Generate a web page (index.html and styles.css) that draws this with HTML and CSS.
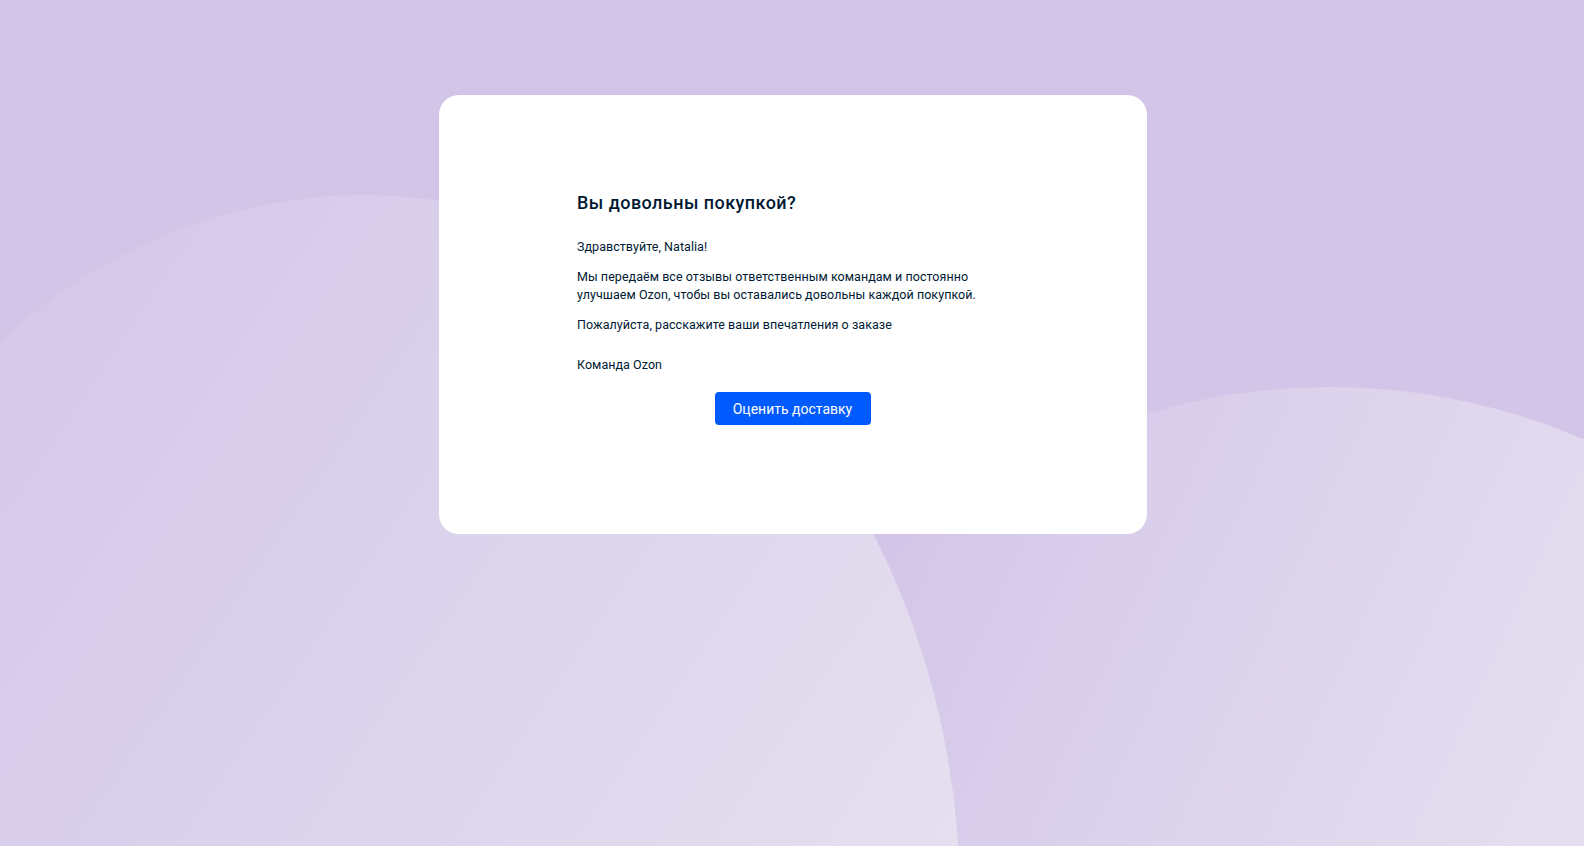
FILE: index.html
```html
<!DOCTYPE html>
<html lang="ru">
<head>
<meta charset="utf-8">
<title>Вы довольны покупкой?</title>
<link rel="stylesheet" href="styles.css">
</head>
<body>
<svg class="backdrop" width="1584" height="846" viewBox="0 0 1584 846" aria-hidden="true">
  <defs>
    <linearGradient id="gl" x1="0" y1="200" x2="960" y2="846" gradientUnits="userSpaceOnUse">
      <stop offset="0" stop-color="#d4c7e8"/>
      <stop offset="0.35" stop-color="#d9cfeb"/>
      <stop offset="1" stop-color="#e5dfef"/>
    </linearGradient>
    <linearGradient id="gr" x1="930" y1="400" x2="1584" y2="700" gradientUnits="userSpaceOnUse">
      <stop offset="0" stop-color="#d3c5e8"/>
      <stop offset="0.4" stop-color="#dad0eb"/>
      <stop offset="1" stop-color="#e4ddef"/>
    </linearGradient>
  </defs>
  <circle cx="1330" cy="1027" r="640" fill="url(#gr)"/>
  <ellipse cx="364" cy="900" rx="596" ry="705" fill="url(#gl)"/>
</svg>
<main class="card">
  <h1 class="title">Вы довольны покупкой?</h1>
  <p class="greeting">Здравствуйте, Natalia!</p>
  <p class="text">Мы передаём все отзывы ответственным командам и постоянно улучшаем Ozon, чтобы вы оставались довольны каждой покупкой.</p>
  <p class="text">Пожалуйста, расскажите ваши впечатления о заказе</p>
  <p class="sign">Команда Ozon</p>
  <div class="actions">
    <a class="btn" href="#">Оценить доставку</a>
  </div>
</main>
</body>
</html>
```
FILE: styles.css
```css
html, body {
  margin: 0;
  padding: 0;
}
body {
  position: relative;
  height: 846px;
  overflow: hidden;
  background: #d3c5e8;
  font-family: Roboto, "Noto Sans", "Liberation Sans", sans-serif;
  color: #001a34;
}
.backdrop {
  position: absolute;
  left: 0;
  top: 0;
  z-index: 0;
}
.card {
  position: relative;
  z-index: 1;
  box-sizing: border-box;
  width: 708px;
  margin: 95px 0 0 calc(50% - 353px);
  padding: 96px 139px 109px 138px;
  background: #ffffff;
  border-radius: 20px;
}
.title {
  margin: 0 0 23px;
  font-size: 18px;
  line-height: 24px;
  font-weight: 500;
  letter-spacing: 0.45px;
}
.greeting,
.text,
.sign {
  margin: 0 0 12px;
  font-size: 12.5px;
  line-height: 18px;
  letter-spacing: 0.05px;
}
.sign {
  margin-top: 22px;
  margin-bottom: 18px;
}
.actions {
  display: flex;
  justify-content: center;
}
.btn {
  display: inline-flex;
  align-items: center;
  justify-content: center;
  width: 156px;
  height: 33px;
  box-sizing: border-box;
  background: #005bff;
  color: #ffffff;
  border-radius: 4px;
  font-size: 14px;
  text-decoration: none;
}
```
